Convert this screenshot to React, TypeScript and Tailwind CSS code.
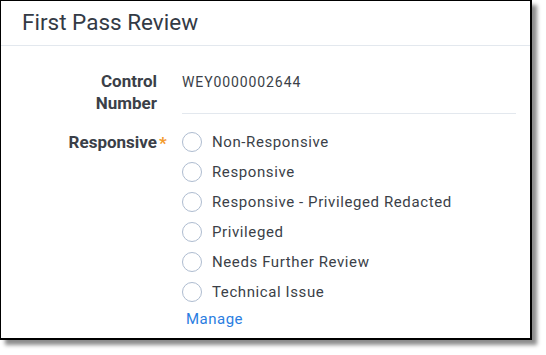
const options = [
  "Non-Responsive",
  "Responsive",
  "Responsive - Privileged Redacted",
  "Privileged",
  "Needs Further Review",
  "Technical Issue",
]

export default function App() {
  return (
    <div className="w-[546px] h-[355px] bg-white font-['Roboto',sans-serif]">
      <div className="w-[532px] h-[340px] border-l border-t border-r-2 border-b-2 border-black bg-white shadow-[5px_5px_4px_rgba(0,0,0,0.45)]">
        <div className="h-[45px] border-b border-[#e3e8ee] pl-[21px] flex items-center">
          <h1 className="text-[22.5px] text-[#333a45]">First Pass Review</h1>
        </div>
        <div className="pt-[24px]">
          <div className="flex">
            <div className="w-[156px] text-right text-[17px] leading-[22px] font-bold text-[#3b3f48]">
              Control
              <br />
              Number
            </div>
            <div className="ml-[25px] w-[334px] border-b border-[#e3e8ee] pt-0 h-[44px]">
              <span className="text-[14px] tracking-[0.9px] text-[#3b3f48]">WEY0000002644</span>
            </div>
          </div>
          <div className="flex mt-[16px]">
            <div className="w-[156px] text-right text-[17px] leading-[22px] font-bold text-[#3b3f48] pt-[1px]">
              <span className="relative">
                Responsive
                <span className="absolute left-full top-0 ml-[2px] text-[#f39a2b]">*</span>
              </span>
            </div>
            <div className="ml-[25px] flex flex-col">
              {options.map((o) => (
                <div key={o} className="flex items-center h-[30px] first:-mt-[3px]">
                  <div className="w-[20px] h-[20px] rounded-full border border-[#aebcd0] bg-white" />
                  <span className="ml-[10px] text-[15px] tracking-[0.6px] text-[#3b3f48]">{o}</span>
                </div>
              ))}
              <a className="mt-[1px] ml-[4px] text-[15px] tracking-[0.5px] text-[#2a7de1]">Manage</a>
            </div>
          </div>
        </div>
      </div>
    </div>
  )
}
